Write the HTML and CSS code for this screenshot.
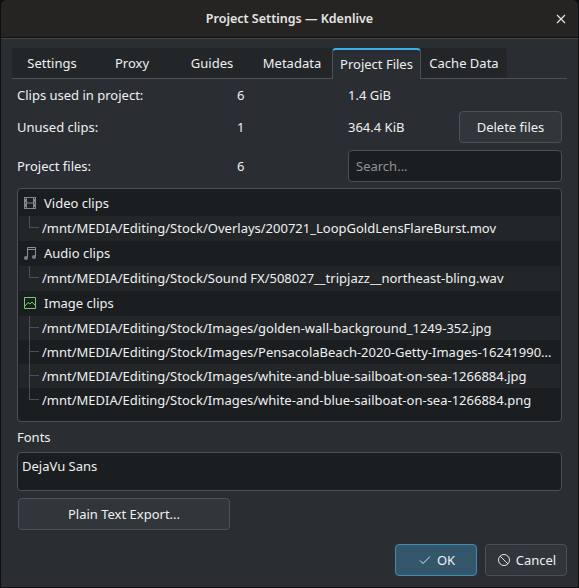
FILE: index.html
```html
<!DOCTYPE html>
<html lang="en">
<head>
  <meta charset="UTF-8">
  <title>Project Settings — Kdenlive</title>
  <link rel="stylesheet" href="styles.css">
</head>
<body>
  <div class="window">
    <div class="titlebar">
      <span class="title">Project Settings — Kdenlive</span>
      <svg class="close" width="10" height="10" viewBox="0 0 10 10"><path d="M1 1l8 8M9 1l-8 8" stroke="#e4e5e6" stroke-width="1.2" fill="none"/></svg>
    </div>

    <div class="content">
      <div class="tabs">
        <div class="tabrow">
          <div class="tab">Settings</div>
          <div class="tab">Proxy</div>
          <div class="tab">Guides</div>
          <div class="tab">Metadata</div>
          <div class="tab active">Project Files</div>
          <div class="tab last">Cache Data</div>
        </div>
      </div>

      <div class="stats">
        <div class="stat">
          <span class="name">Clips used in project:</span>
          <span class="count">6</span>
          <span class="size">1.4 GiB</span>
        </div>
        <div class="stat">
          <span class="name">Unused clips:</span>
          <span class="count">1</span>
          <span class="size">364.4 KiB</span>
          <button class="btn delete">Delete files</button>
        </div>
        <div class="stat">
          <span class="name">Project files:</span>
          <span class="count">6</span>
          <div class="search">Search...</div>
        </div>
      </div>

      <div class="tree">
        <div class="group">
          <svg width="16" height="16" viewBox="0 0 16 16"><path fill="#85888b" fill-rule="evenodd" d="M2 2h12v12H2zM3 3v1h1V3zm0 4.500v1h1v-1zM3 12v1h1v-1zM5 3v4.500h6V3zm0 5.500V13h6V8.500zM12 3v1h1V3zm0 4.500v1h1v-1zm0 4.500v1h1v-1z"/></svg>
          Video clips
        </div>
        <div class="file alt tall"><span class="branch"></span><span class="path">/mnt/MEDIA/Editing/Stock/Overlays/200721_LoopGoldLensFlareBurst.mov</span></div>

        <div class="group">
          <svg width="16" height="16" viewBox="0 0 16 16"><path fill="none" stroke="#8c8f92" d="M5.500 12.500V2.500h8v9"/><path fill="none" stroke="#8c8f92" d="M5.500 4.500h8"/><circle cx="4" cy="13" r="2" fill="#6f8396"/><circle cx="12" cy="12" r="2" fill="#6f8396"/></svg>
          Audio clips
        </div>
        <div class="file alt tall"><span class="branch"></span><span class="path">/mnt/MEDIA/Editing/Stock/Sound FX/508027__tripjazz__northeast-bling.wav</span></div>

        <div class="group">
          <svg width="16" height="16" viewBox="0 0 16 16"><path fill="none" stroke="#6fcf6f" d="M2.500 2.500h11v11h-11z"/><path fill="none" stroke="#6fcf6f" d="M3 11l3-3.500 2 1.500 2-2 3 3"/></svg>
          Image clips
        </div>
        <div class="file alt"><span class="branch more"></span><span class="path">/mnt/MEDIA/Editing/Stock/Images/golden-wall-background_1249-352.jpg</span></div>
        <div class="file"><span class="branch more"></span><span class="path">/mnt/MEDIA/Editing/Stock/Images/PensacolaBeach-2020-Getty-Images-16241990...</span></div>
        <div class="file alt"><span class="branch more"></span><span class="path">/mnt/MEDIA/Editing/Stock/Images/white-and-blue-sailboat-on-sea-1266884.jpg</span></div>
        <div class="file"><span class="branch"></span><span class="path">/mnt/MEDIA/Editing/Stock/Images/white-and-blue-sailboat-on-sea-1266884.png</span></div>
      </div>

      <div class="fonts-label">Fonts</div>
      <div class="fonts">DejaVu Sans</div>

      <button class="btn export">Plain Text Export...</button>

      <div class="actions">
        <button class="btn ok">
          <svg width="16" height="16" viewBox="0 0 16 16"><path d="M3 8.500l3 3 7-7" stroke="#e4e5e6" fill="none"/></svg>
          OK
        </button>
        <button class="btn cancel">
          <svg width="16" height="16" viewBox="0 0 16 16"><circle cx="8" cy="8" r="5.500" stroke="#e4e5e6" fill="none"/><path d="M4 4l8 8" stroke="#e4e5e6" fill="none"/></svg>
          Cancel
        </button>
      </div>
    </div>
  </div>
</body>
</html>
```

FILE: styles.css
```css
* {
  box-sizing: border-box;
}

html, body {
  height: 100%;
}

body {
  margin: 0;
  background-color: #0d0e0f;
  font-family: "Noto Sans", sans-serif;
  font-size: 13px;
  color: #eff0f1;
  overflow: hidden;
}

.window {
  display: flex;
  flex-direction: column;
  height: 587px;
  margin: 0 1px;
  background-color: #2a2e32;
  border-radius: 6px 6px 0 0;
  overflow: hidden;
}

.titlebar {
  display: flex;
  align-items: center;
  justify-content: center;
  flex: 0 0 38px;
  padding-bottom: 1px;
  background-color: #262422;
  border-bottom: 1px solid #0f1011;
  position: relative;
}

.title {
  font-size: 12.5px;
  font-weight: 600;
  color: #e4e5e6;
}

.close {
  position: absolute;
  right: 12px;
  top: 14px;
}

.content {
  display: flex;
  flex-direction: column;
  flex: 1;
  padding: 9px 11px 11px 11px;
  border-top: 1px solid #43474c;
}

.tabs {
  border-bottom: 1px solid #4d5157;
}

.tabrow {
  display: flex;
  width: 495px;
  height: 30px;
  background-color: #232629;
  border-radius: 4px 4px 0 0;
}

.tab {
  min-width: 80px;
  padding: 0 8px;
  line-height: 30px;
  text-align: center;
}

.tab.active {
  width: 89px;
  background-color: #2a2e32;
  border: 1px solid #4d5157;
  border-top: 2px solid #3daee9;
  border-bottom: none;
  border-radius: 4px 4px 0 0;
  line-height: 28px;
  height: 31px;
  padding: 0;
}

.tab.last {
  min-width: 86px;
}

.stats {
  display: flex;
  flex-direction: column;
  padding: 0 5px;
}

.stat {
  display: grid;
  grid-template-columns: 220px 111px 111px 103px;
  align-items: center;
  height: 32px;
}

.stat:nth-child(3) {
  height: 41px;
  padding-top: 5px;
}

.delete {
  height: 32px;
}

.search {
  grid-column: 3 / 5;
  height: 32px;
  line-height: 30px;
  padding-left: 7px;
  color: #8f9295;
  background-color: #1b1e20;
  border: 1px solid #4d5157;
  border-radius: 4px;
}

.btn {
  font-family: inherit;
  font-size: 13px;
  color: #eff0f1;
  background-color: #31363b;
  border: 1px solid #4d5157;
  border-radius: 4px;
  padding: 0;
}

.tree {
  display: flex;
  flex-direction: column;
  height: 234px;
  margin: 4px 5px 0 5px;
  padding: 2px 1px;
  background-color: #1b1e20;
  border: 1px solid #4d5157;
  border-radius: 4px;
}

.group {
  display: flex;
  align-items: center;
  gap: 6px;
  height: 25px;
  padding: 0 0 1px 3px;
}

.file {
  display: flex;
  align-items: center;
  height: 24px;
  padding-left: 10px;
}

.file.tall {
  height: 25px;
  padding-bottom: 1px;
}

.file.alt {
  background-color: #232629;
}

.branch {
  flex: 0 0 10px;
  align-self: flex-start;
  height: 12px;
  margin-right: 3px;
  border-left: 1px solid #4d5157;
  border-bottom: 1px solid #4d5157;
}

.branch.more {
  position: relative;
}

.branch.more::after {
  content: "";
  position: absolute;
  left: -1px;
  top: 11px;
  height: 13px;
  border-left: 1px solid #4d5157;
}

.path {
  white-space: nowrap;
}

.fonts-label {
  margin: 6px 5px 0 5px;
  height: 19px;
  line-height: 19px;
}

.fonts {
  height: 39px;
  margin: 5px 5px 0 5px;
  padding: 4px 4px;
  background-color: #1b1e20;
  border: 1px solid #4d5157;
  border-radius: 4px;
}

.export {
  width: 212px;
  height: 32px;
  margin: 7px 0 0 6px;
}

.actions {
  display: flex;
  justify-content: flex-end;
  gap: 8px;
  margin-top: 14px;
}

.ok, .cancel {
  display: flex;
  align-items: center;
  justify-content: center;
  gap: 4px;
  width: 82px;
  height: 32px;
}

.ok {
  background-color: #33566b;
  border-color: #3f8bb3;
}
```
